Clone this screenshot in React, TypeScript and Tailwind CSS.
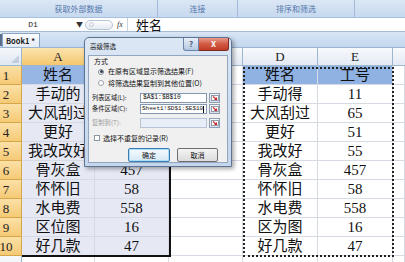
import React from 'react'

const serif = "font-[family-name:'Liberation_Serif','Noto_Sans_CJK_SC',serif]"
const sans = "font-[family-name:'Noto_Sans_CJK_SC','Liberation_Sans',sans-serif]"
const mono = "font-[family-name:'Liberation_Mono',monospace]"

const widths = ['w-[73px]', 'w-[74px]', 'w-[74px]', 'w-[75px]', 'w-[75px]']
const letters = ['A', 'B', 'C', 'D', 'E']

// B1:B5 sit under the dialog, so they stay blank here
const left = [
  ['姓名', ''],
  ['手动的', ''],
  ['大风刮过', ''],
  ['更好', ''],
  ['我改改好', ''],
  ['骨灰盒', '457'],
  ['怀怀旧', '58'],
  ['水电费', '558'],
  ['区位图', '16'],
  ['好几款', '47'],
]

const right = [
  ['姓名', '工号'],
  ['手动得', '11'],
  ['大风刮过', '65'],
  ['更好', '51'],
  ['我改好', '55'],
  ['骨灰盒', '457'],
  ['怀怀旧', '58'],
  ['水电费', '558'],
  ['区为图', '16'],
  ['好几款', '47'],
]

function RefButton() {
  return (
    <div className="w-[11px] h-[10px] border border-[#8d9db4] bg-linear-to-b from-[#f4f7fb] to-[#d6e0ec] flex items-center justify-center">
      <svg width="8" height="6" viewBox="0 0 8 6">
        <rect x="0.5" y="0.5" width="7" height="5" fill="#fff" stroke="#7d8796" strokeWidth="0.8" />
        <path d="M2 1.5 L5.5 4.5 M5.5 2.5 L5.5 4.5 L3.5 4.5" stroke="#c8262a" strokeWidth="1.1" fill="none" />
      </svg>
    </div>
  )
}

function Cell({ w, text, bg, last }: { w: string; text: string; bg: string; last?: boolean }) {
  return (
    <div
      className={`${w} ${bg} h-full shrink-0 border-r border-b border-[#d5dae3] flex items-end justify-center leading-[17px] text-[15px] text-[#111] ${last ? 'flex-1' : ''}`}
    >
      {text}
    </div>
  )
}

export default function App() {
  return (
    <div className={`relative w-[405px] h-[262px] overflow-hidden bg-white ${sans}`}>
      {/* ribbon group labels */}
      <div className="flex h-[18px] bg-linear-to-b from-[#dbe7f5] to-[#c6d9ef] border-b border-[#a8c0dd] text-[8px] text-[#5476aa]">
        <div className="w-[158px] flex items-center justify-center border-r border-[#a3bbd9]">获取外部数据</div>
        <div className="w-[80px] flex items-center justify-center border-r border-[#a3bbd9]">连接</div>
        <div className="w-[117px] flex items-center justify-center border-r border-[#a3bbd9]">排序和筛选</div>
        <div className="flex-1" />
      </div>

      {/* formula bar */}
      <div className="flex h-[14px] items-center bg-white border-b border-[#a6bad3]">
        <div className={`w-[66px] text-center text-[8px] text-[#222] ${mono}`}>D1</div>
        <div className="w-[10px]" />
        <div className="w-[6px] text-[7px] leading-none text-[#333]">▼</div>
        <div className="ml-[3px] w-[28px] h-[10px] rounded-full border border-[#b5c3d4] bg-linear-to-b from-[#ffffff] to-[#e4eaf2] flex items-center pl-[3px]">
          <div className="w-[5px] h-[5px] rounded-full border border-[#c4ccd6]" />
        </div>
        <div className={`ml-[4px] w-[10px] text-[8px] italic text-[#333] ${serif}`}>fx</div>
        <div className="w-px h-full bg-[#c8d3e0]" />
        <div className="ml-[8px] text-[13px] leading-none text-[#111]">姓名</div>
      </div>

      {/* workbook tab bar */}
      <div className="flex h-[16px] items-end bg-linear-to-b from-[#d8e5f5] to-[#c3d7ee] border-b border-[#9ab3d3]">
        <div className="w-[2px] h-[12px] bg-[#5a6f8e] mb-[1px]" />
        <div className="w-[38px] h-[14px] bg-linear-to-b from-[#fbfcfe] to-[#e3ebf6] border border-b-0 border-[#8aa4c6] flex items-center pl-[3px] text-[7.5px] font-bold text-[#1d1d1d]">
          Book1 *
        </div>
      </div>

      {/* column headers */}
      <div className={`flex h-[18px] ${serif}`}>
        <div className="w-[22px] shrink-0 bg-linear-to-b from-[#f5f8fc] to-[#dfe7f2] border-r border-b border-[#9eb6ce] relative">
          <div className="absolute right-[2px] bottom-[2px] w-0 h-0 border-l-[8px] border-l-transparent border-b-[8px] border-b-[#c3cfdd]" />
        </div>
        {letters.map((l, i) => (
          <div
            key={l}
            className={`${widths[i]} shrink-0 border-r border-b border-[#9eb6ce] flex items-center justify-center text-[13px] text-[#222] ${
              i < 2 ? 'bg-linear-to-b from-[#fbe4ae] to-[#f4c76d]' : 'bg-linear-to-b from-[#f7f9fc] to-[#e3eaf4]'
            }`}
          >
            {i === 1 ? '' : l}
          </div>
        ))}
        <div className="flex-1 bg-linear-to-b from-[#f7f9fc] to-[#e3eaf4] border-b border-[#9eb6ce]" />
      </div>

      {/* rows */}
      <div className={serif}>
        {left.map((r, i) => {
          const rr = right[i]
          const selBg = i === 0 ? 'bg-[#97b6e4]' : 'bg-[#e6e9f4]'
          const rightBg = i === 0 ? 'bg-[#8fb2e2]' : 'bg-white'
          return (
            <div key={i} className="flex h-[19px]">
              <div className="w-[22px] shrink-0 h-full bg-linear-to-b from-[#fbe0a6] to-[#f5ca75] border-r border-b border-[#d6a64a] flex items-end justify-center pr-[9px] text-[13px] leading-[17px] text-[#222]">
                {i + 1}
              </div>
              <Cell w={widths[0]} text={r[0]} bg={selBg} />
              <Cell w={widths[1]} text={r[1]} bg={selBg} />
              <Cell w={widths[2]} text="" bg="bg-white" />
              <Cell w={widths[3]} text={rr[0]} bg={rightBg} />
              <Cell w={widths[4]} text={rr[1]} bg={rightBg} />
              <Cell w="" text="" bg="bg-white" last />
            </div>
          )
        })}
        <div className="flex h-[19px]">
          <div className="w-[22px] shrink-0 h-full bg-linear-to-b from-[#f7f9fc] to-[#e3eaf4] border-r border-[#9eb6ce]" />
          <Cell w={widths[0]} text="" bg="bg-white" />
          <Cell w={widths[1]} text="" bg="bg-white" />
          <Cell w={widths[2]} text="" bg="bg-white" />
          <Cell w={widths[3]} text="" bg="bg-white" />
          <Cell w={widths[4]} text="" bg="bg-white" />
          <Cell w="" text="" bg="bg-white" last />
        </div>
      </div>

      {/* selection border A1:B10 */}
      <div className="absolute left-[22px] top-[66px] w-[149px] h-[191px] border-r-2 border-b-2 border-[#111] pointer-events-none" />

      {/* marching ants D1:E10 */}
      <div className="absolute left-[243px] top-[67px] w-[151px] h-[190px] border-2 border-dotted border-[#222] pointer-events-none" />

      {/* advanced filter dialog */}
      <div className="absolute left-[84px] top-[37px] w-[148px] h-[130px] rounded-t-[5px] border border-[#5d7493] bg-linear-to-b from-[#dce7f5] to-[#c4d6ec] shadow-[2px_2px_4px_rgba(0,0,0,0.35)]">
        <div className="relative h-[17px]">
          <div className="absolute left-[5px] top-[4px] text-[6.5px] leading-[8px] text-[#1b1b1b]">高级筛选</div>
          <div className="absolute left-[98px] top-0 w-[16px] h-[13px] rounded-bl-[3px] border border-t-0 border-[#6a83a6] bg-linear-to-b from-[#e8eff8] to-[#b4c8e2] flex items-center justify-center text-[8px] font-bold text-[#4b5d78] leading-none">
            ?
          </div>
          <div className="absolute left-[114px] top-0 w-[30px] h-[13px] rounded-br-[3px] border border-t-0 border-l-0 border-[#7a2a1e] bg-linear-to-b from-[#e7998a] via-[#d35a44] to-[#c23a26] flex items-center justify-center text-[8px] font-bold text-white leading-none">
            X
          </div>
        </div>
        <div className="mx-[3px] h-[108px] bg-[#f0f0f0] border border-[#92a6c0] flex flex-col text-[7px] text-[#111]">
          <div className="h-[10px] flex items-center pl-[5px] leading-none">方式</div>
          <div className="h-[11px] flex items-center pl-[9px] leading-none whitespace-nowrap">
            <div className="w-[6px] h-[6px] rounded-full border border-[#7d8794] bg-white flex items-center justify-center mr-[4px]">
              <div className="w-[3px] h-[3px] rounded-full bg-[#2c3a4c]" />
            </div>
            <span>在原有区域显示筛选结果(F)</span>
          </div>
          <div className="h-[12px] flex items-center pl-[9px] leading-none whitespace-nowrap">
            <div className="w-[6px] h-[6px] rounded-full border border-[#9aa3ae] bg-white mr-[4px]" />
            <span>将筛选结果复制到其他位置(O)</span>
          </div>
          <div className="h-[4px]" />
          <div className="h-[10px] flex items-center pl-[3px] leading-none">
            <div className="w-[48px] text-[6.3px] whitespace-nowrap">列表区域(L):</div>
            <div className={`w-[67px] h-[10px] bg-white border border-[#8497b0] flex items-center pl-[2px] text-[6.3px] overflow-hidden whitespace-nowrap ${mono}`}>
              $A$1:$B$10
            </div>
            <div className="ml-[2px]">
              <RefButton />
            </div>
          </div>
          <div className="h-[1px]" />
          <div className="h-[10px] flex items-center pl-[3px] leading-none">
            <div className="w-[48px] text-[6.3px] whitespace-nowrap">条件区域(C):</div>
            <div className={`w-[67px] h-[10px] bg-white border border-[#8497b0] flex items-center pl-[1px] text-[6px] overflow-hidden whitespace-nowrap ${mono}`}>
              <span>Sheet1!$D$1:$E$10</span>
              <div className="w-px h-[7px] bg-[#111]" />
            </div>
            <div className="ml-[2px]">
              <RefButton />
            </div>
          </div>
          <div className="h-[4px]" />
          <div className="h-[10px] flex items-center pl-[3px] leading-none">
            <div className="w-[48px] text-[6.3px] text-[#9a9a9a] whitespace-nowrap">复制到(T):</div>
            <div className="w-[67px] h-[10px] bg-[#e7eef7] border border-[#b6c4d6]" />
            <div className="ml-[2px]">
              <RefButton />
            </div>
          </div>
          <div className="h-[5px]" />
          <div className="h-[10px] flex items-center pl-[5px] leading-none whitespace-nowrap">
            <div className="w-[6px] h-[6px] border border-[#8b96a3] bg-white mr-[3px]" />
            <span>选择不重复的记录(R)</span>
          </div>
          <div className="h-[5px]" />
          <div className="h-[14px] flex items-center pl-[39px] leading-none">
            <div className="w-[42px] h-[14px] rounded-[2px] border border-[#3c7db3] bg-linear-to-b from-[#f6fbfe] to-[#d6e8f6] shadow-[inset_0_0_0_1px_#a9dcf6] flex items-center justify-center">
              确定
            </div>
            <div className="ml-[7px] w-[41px] h-[14px] rounded-[2px] border border-[#707070] bg-linear-to-b from-[#f4f4f4] to-[#dcdcdc] flex items-center justify-center">
              取消
            </div>
          </div>
        </div>
      </div>
    </div>
  )
}
